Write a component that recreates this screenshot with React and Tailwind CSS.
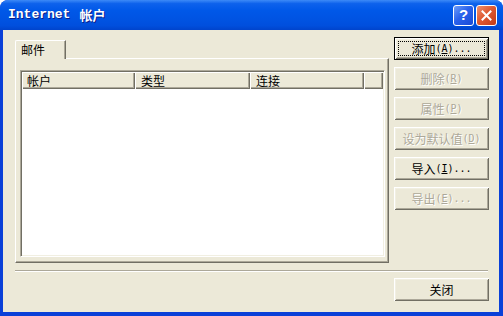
import React from "react";

const cjk = "font-['Noto_Sans_CJK_SC',sans-serif]";
const mono = "font-['DejaVu_Sans_Mono',monospace] text-[10px]";

// classic 3D button bevel
const raised =
  "shadow-[inset_1px_1px_0_#fff,inset_-1px_-1px_0_#716F64,inset_2px_2px_0_#F1EFE2,inset_-2px_-2px_0_#ACA899]";

const Button = ({ label, hot, tail = "", disabled, isDefault }) => (
  <div
    className={`flex h-[23px] w-[95px] bg-[#ECE9D8] ${raised} ${
      isDefault ? "border border-black" : ""
    }`}
  >
    <div
      className={`m-[3px] flex flex-1 items-center justify-center border border-dotted ${
        isDefault ? "border-black" : "border-transparent"
      } ${
        disabled
          ? "text-[#ACA899] [text-shadow:1px_1px_0_#fff]"
          : "text-black"
      }`}
    >
      <span className={`${cjk} text-[12px] leading-[14px]`}>{label}</span>
      {hot && (
        <span className={`${mono} leading-[14px]`}>
          (<span className="underline underline-offset-1">{hot}</span>){tail}
        </span>
      )}
    </div>
  </div>
);

const HeaderCell = ({ children, className = "" }) => (
  <div
    className={`flex h-[17px] items-center bg-[#ECE9D8] shadow-[inset_1px_1px_0_#fff,inset_-1px_-1px_0_#716F64,inset_-2px_-2px_0_#ACA899] ${cjk} text-[12px] text-black ${className}`}
  >
    {children}
  </div>
);

export default function App() {
  return (
    <div className="h-[316px] w-[503px] bg-white">
      <div className="flex h-[316px] w-[503px] flex-col overflow-hidden rounded-t-[8px] bg-[#0A40D8]">
        {/* Title bar */}
        <div className="flex h-[30px] items-center bg-[linear-gradient(to_bottom,#3D8AF7_0%,#0E62EC_12%,#0058E8_35%,#0054E3_60%,#004FDD_85%,#0044CC_100%)] pl-[8px] pr-[6px]">
          <div className="flex flex-1 items-center text-white [text-shadow:1px_1px_0_#0A1E8A]">
            <span className="font-['Liberation_Mono',monospace] text-[13px] font-bold">Internet</span>
            <span className={`${cjk} ml-[9px] text-[13px] font-bold`}>帐户</span>
          </div>
          <div className="flex gap-[2px] pt-[1px]">
            <div className="flex h-[21px] w-[21px] items-center justify-center rounded-[3px] border border-white bg-[linear-gradient(135deg,#6E9DF8_0%,#2A62EC_45%,#1A4AD6_100%)] font-['Liberation_Sans',sans-serif] text-[15px] font-bold text-white">
              ?
            </div>
            <div className="flex h-[21px] w-[21px] items-center justify-center rounded-[3px] border border-white bg-[linear-gradient(135deg,#EE9170_0%,#DF5A32_45%,#C23A18_100%)]">
              <svg width="11" height="11" viewBox="0 0 11 11">
                <path d="M1.5 1.5 L9.5 9.5 M9.5 1.5 L1.5 9.5" stroke="#fff" strokeWidth="2" strokeLinecap="square" />
              </svg>
            </div>
          </div>
        </div>

        {/* Frame + client */}
        <div className="flex flex-1 pb-[4px] pl-[3px] pr-[4px]">
          <div className="flex h-[282px] w-[496px] flex-col bg-[#ECE9D8]">
            <div className="flex gap-[5px] pl-[12px] pt-[7px]">
              {/* Tab control */}
              <div className="flex flex-col pt-[3px]">
                <div className={`relative z-10 -mb-px flex h-[19px] w-[51px] items-center rounded-tl-[2px] border-l border-r border-t border-l-white border-r-[#716F64] border-t-white bg-[#ECE9D8] pb-[1px] pl-[5px] shadow-[inset_-1px_0_0_#ACA899] ${cjk} text-[12px] text-black`}>
                  邮件
                </div>
                <div className="h-[205px] w-[374px] border-b border-l border-r border-t border-b-[#716F64] border-l-white border-r-[#716F64] border-t-white pl-[4px] pt-[11px] shadow-[inset_-1px_-1px_0_#ACA899]">
                  {/* List view */}
                  <div className="h-[187px] w-[365px] border-b border-l border-r border-t border-b-white border-l-[#ACA899] border-r-white border-t-[#ACA899] bg-white p-[1px] shadow-[inset_1px_1px_0_#716F64,inset_-1px_-1px_0_#F1EFE2]">
                    <div className="flex">
                      <HeaderCell className="w-[113px] pl-[5px]">帐户</HeaderCell>
                      <HeaderCell className="w-[115px] pl-[6px]">类型</HeaderCell>
                      <HeaderCell className="w-[114px] pl-[6px]">连接</HeaderCell>
                      <HeaderCell className="flex-1" />
                    </div>
                  </div>
                </div>
              </div>

              {/* Buttons */}
              <div className="flex flex-col gap-[7px]">
                <Button label="添加" hot="A" tail="..." isDefault />
                <Button label="删除" hot="R" disabled />
                <Button label="属性" hot="P" disabled />
                <Button label="设为默认值" hot="D" disabled />
                <Button label="导入" hot="I" tail="..." />
                <Button label="导出" hot="E" tail="..." disabled />
              </div>
            </div>

            {/* Separator */}
            <div className="ml-[12px] mr-[11px] mt-[7px] h-[2px] border-b border-t border-b-white border-t-[#ACA899]" />

            <div className="mt-[6px] flex justify-end pr-[10px]">
              <Button label="关闭" />
            </div>
          </div>
        </div>
      </div>
    </div>
  );
}
